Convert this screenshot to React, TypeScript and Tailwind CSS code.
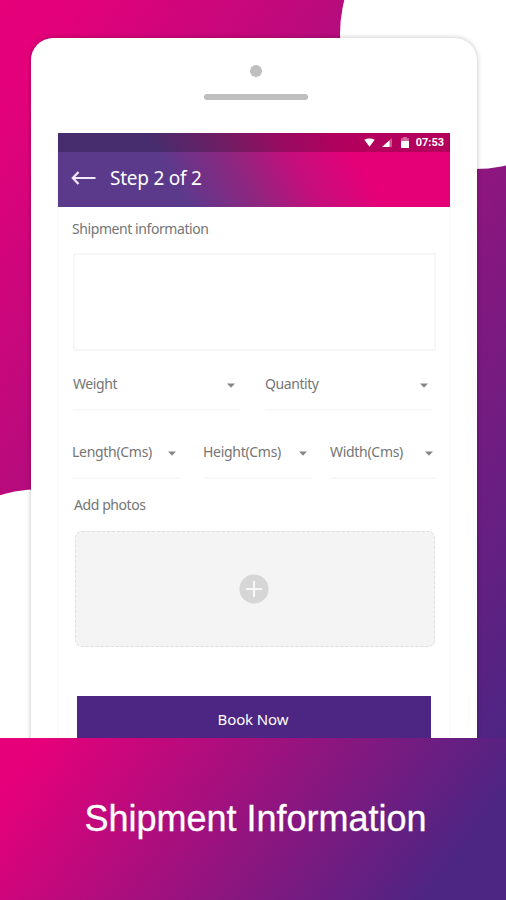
import React from "react";

interface SelectFieldProps {
  label: string;
  className: string;
  labelClass?: string;
}

// Flat dropdown with a caret and a thin underline
function SelectField({ label, className, labelClass = "" }: SelectFieldProps) {
  return (
    <button
      className={`flex h-[39px] items-start justify-between border-b-2 border-[#f8f8f8] text-left ${className}`}
    >
      <span className={`whitespace-nowrap leading-6 ${labelClass}`}>{label}</span>
      <svg className="mt-[11px] h-[5px] w-[8px]" viewBox="0 0 8 5">
        <path d="M0 0.5H8L4 4.7Z" fill="#858585" />
      </svg>
    </button>
  );
}

function StatusBar() {
  return (
    <div className="flex h-[19px] items-center justify-end bg-black/22 pr-[6px] text-white">
      <svg className="mr-[7px] h-[9px] w-[11px]" viewBox="0 0 11 9">
        <path d="M0.3 1.8C3.4 -0.1 7.6 -0.1 10.7 1.8L5.5 8.8Z" fill="#fff" />
      </svg>
      <svg className="mr-[9px] h-[9px] w-[10px]" viewBox="0 0 10 9">
        <path d="M10 0V9H0Z" fill="#fff" opacity="0.35" />
        <path d="M7.5 2.3V9H0Z" fill="#fff" />
      </svg>
      <svg className="mr-[7px] h-[11px] w-[8px]" viewBox="0 0 8 11">
        <path d="M2 0H6V1.3H8V4H0V1.3H2Z" fill="#fff" opacity="0.4" />
        <path d="M0 4H8V11H0Z" fill="#fff" />
      </svg>
      <span className="font-['Roboto',sans-serif] text-[11px] font-bold leading-none">
        07:53
      </span>
    </div>
  );
}

function Header() {
  return (
    <div className="-mx-px bg-[linear-gradient(60deg,#5b3a8c_0%,#5b3a8c_30%,#94247f_48%,#c40e7c_60%,#e60078_75%,#e60078_100%)]">
      <StatusBar />
      <div className="flex h-[55px] items-center pb-[3px] pl-[13px] text-white">
        <svg className="h-[16px] w-[25px]" viewBox="0 0 25 16" fill="none">
          <path
            d="M24.5 8H2M7.5 2L1.8 8L7.5 14"
            stroke="#f3e9f8"
            strokeWidth="2.2"
          />
        </svg>
        <h1 className="ml-[14px] font-['Noto_Sans',sans-serif] text-[19px] tracking-[-0.25px]">
          Step 2 of 2
        </h1>
      </div>
    </div>
  );
}

function ShipmentForm() {
  return (
    <div className="flex flex-col pl-[13px] text-[14px] tracking-[-0.42px] text-[#757575]">
      <label className="mt-[10px] leading-6">Shipment information</label>
      <div className="ml-px mt-[12px] h-[98px] w-[363px] border-2 border-[#f7f7f7]" />
      <div className="ml-px mt-[21px] flex gap-[25px]">
        <SelectField label="Weight" className="w-[167px] pr-[5px]" />
        <SelectField label="Quantity" className="w-[167px] pr-[4px]" />
      </div>
      <div className="mt-[29px] flex tracking-[-0.3px]">
        <SelectField label="Length(Cms)" className="w-[109px] pr-[5px]" />
        <SelectField
          label="Height(Cms)"
          className="ml-[23px] w-[108px] pr-[5px]"
          labelClass="-ml-px"
        />
        <SelectField label="Width(Cms)" className="ml-[18px] w-[107px] pr-[4px]" />
      </div>
      <label className="ml-[2px] mt-[14px] leading-6">Add photos</label>
      <button className="ml-[3px] mt-[14px] flex h-[116px] w-[360px] items-center justify-center rounded-[7px] border border-dashed border-[#dedede] bg-[#f4f4f4]">
        <svg className="mr-[2px] h-[30px] w-[30px]" viewBox="0 0 30 30">
          <circle cx="15" cy="15" r="14.6" fill="#d6d6d6" />
          <path d="M15 7V23M7 15H23" stroke="#f8f8f8" strokeWidth="2" />
        </svg>
      </button>
      <button className="ml-[5px] mt-[49px] h-[46px] w-[354px] bg-[#4d2583] pr-[2px] text-[15px] tracking-[-0.1px] text-white">
        Book Now
      </button>
    </div>
  );
}

export default function App() {
  return (
    <div className="relative h-[900px] w-[506px] overflow-hidden bg-white font-['Noto_Sans',sans-serif]">
      {/* BACKDROP */}
      <svg className="absolute left-0 top-0 h-[738px] w-[506px]" viewBox="0 0 506 738">
        <defs>
          <linearGradient id="backdrop" x1="0" y1="0" x2="1" y2="1">
            <stop offset="0" stopColor="#e6007a" />
            <stop offset="0.08" stopColor="#e2017a" />
            <stop offset="1" stopColor="#4d2583" />
          </linearGradient>
        </defs>
        <rect width="506" height="738" fill="url(#backdrop)" />
        <circle cx="475" cy="34" r="135" fill="#fff" />
        <circle cx="41" cy="624" r="135" fill="#fff" />
      </svg>
      {/* TABLET */}
      <div className="relative flex h-[738px] flex-col overflow-hidden pt-[38px]">
        <div className="ml-[31px] flex h-[720px] w-[446px] flex-col items-center rounded-t-[22px] bg-white pt-[27px] shadow-[0_0_5px_rgba(0,0,0,0.25)]">
          <div className="ml-[3px] h-[12px] w-[12px] rounded-full bg-[#bfbfbf]" />
          <div className="ml-[3px] mt-[17px] h-[6px] w-[104px] rounded-full bg-[#bfbfbf]" />
          <div className="mt-[33px] h-[620px] w-[394px] border-x-2 border-[#fafafa]">
            <Header />
            <ShipmentForm />
          </div>
        </div>
      </div>
      {/* CAPTION */}
      <div className="relative flex h-[162px] items-center justify-center bg-[linear-gradient(126deg,#e6007a_0%,#e6007a_7%,#4d2583_87%,#4d2583_100%)]">
        <h2 className="ml-[5px] whitespace-nowrap font-['Liberation_Sans',sans-serif] text-[36px] text-white [-webkit-text-stroke:0.3px_white]">
          Shipment Information
        </h2>
      </div>
    </div>
  );
}
